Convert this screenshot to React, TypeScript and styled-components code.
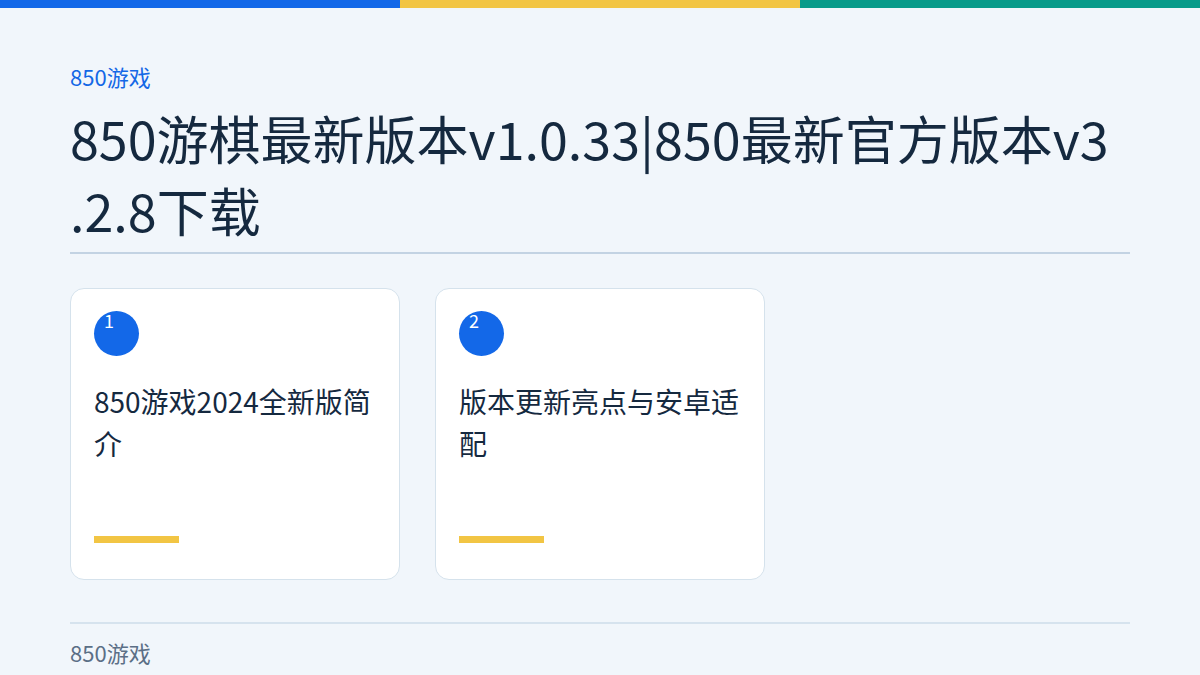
import React from 'react';
import styled, { createGlobalStyle } from 'styled-components';

const GlobalStyle = createGlobalStyle`
  html, body {
    margin: 0;
    padding: 0;
    background: #f1f6fb;
    font-family: "Noto Sans CJK SC", "Noto Sans", sans-serif;
    color: #15293f;
  }
`;

const sections = [
  { num: 1, title: '850游戏2024全新版简介' },
  { num: 2, title: '版本更新亮点与安卓适配' },
];

const App = () => {
  return (
    <Page>
      <GlobalStyle />
      <TopBar>
        <Stripe color="#1368e8" />
        <Stripe color="#f2c544" />
        <Stripe color="#089b8a" />
      </TopBar>
      <Main>
        <Crumb>850游戏</Crumb>
        <Title>850游棋最新版本v1.0.33|850最新官方版本v3.2.8下载</Title>
        <Cards>
          {sections.map((s) => (
            <Card key={s.num}>
              <Badge>{s.num}</Badge>
              <CardTitle>{s.title}</CardTitle>
              <Accent />
            </Card>
          ))}
        </Cards>
        <Footer>850游戏</Footer>
      </Main>
    </Page>
  );
};

export default App;

const Page = styled.div`
  min-height: 100vh;
  background: #f1f6fb;
`;

const TopBar = styled.div`
  display: flex;
  height: 8px;
`;

const Stripe = styled.div<{ color: string }>`
  flex: 1;
  background: ${(p) => p.color};
`;

const Main = styled.main`
  padding: 0 70px;
`;

const Crumb = styled.div`
  padding-top: 52px;
  font-size: 22px;
  line-height: 32px;
  color: #1468e6;
`;

const Title = styled.h1`
  margin: 10px 0 0;
  padding: 0 12px 6px 0;
  font-size: 52px;
  font-weight: 400;
  line-height: 72px;
  color: #15293f;
  line-break: anywhere;
  word-break: break-all;
  border-bottom: 2px solid #c3d3e3;
`;

const Cards = styled.div`
  display: grid;
  grid-template-columns: repeat(3, 1fr);
  gap: 35px;
  margin-top: 34px;
  padding-bottom: 42px;
  border-bottom: 2px solid #d6e3ee;
`;

const Card = styled.div`
  height: 292px;
  box-sizing: border-box;
  padding: 22px 23px;
  background: #fff;
  border: 1.5px solid #d5e2ec;
  border-radius: 14px;
  display: flex;
  flex-direction: column;
`;

const Badge = styled.div`
  width: 45px;
  height: 45px;
  flex-shrink: 0;
  box-sizing: border-box;
  padding-left: 10px;
  border-radius: 50%;
  background: #1368e8;
  color: #fff;
  font-size: 18px;
  line-height: 18px;
`;

const CardTitle = styled.div`
  margin-top: 24px;
  font-size: 28px;
  line-height: 42px;
  color: #15293f;
  word-break: break-all;
`;

const Accent = styled.div`
  margin-top: auto;
  margin-bottom: 14px;
  width: 85px;
  height: 7px;
  background: #f2c544;
`;

const Footer = styled.div`
  padding-top: 12px;
  font-size: 22px;
  line-height: 32px;
  color: #5b6f86;
`;
